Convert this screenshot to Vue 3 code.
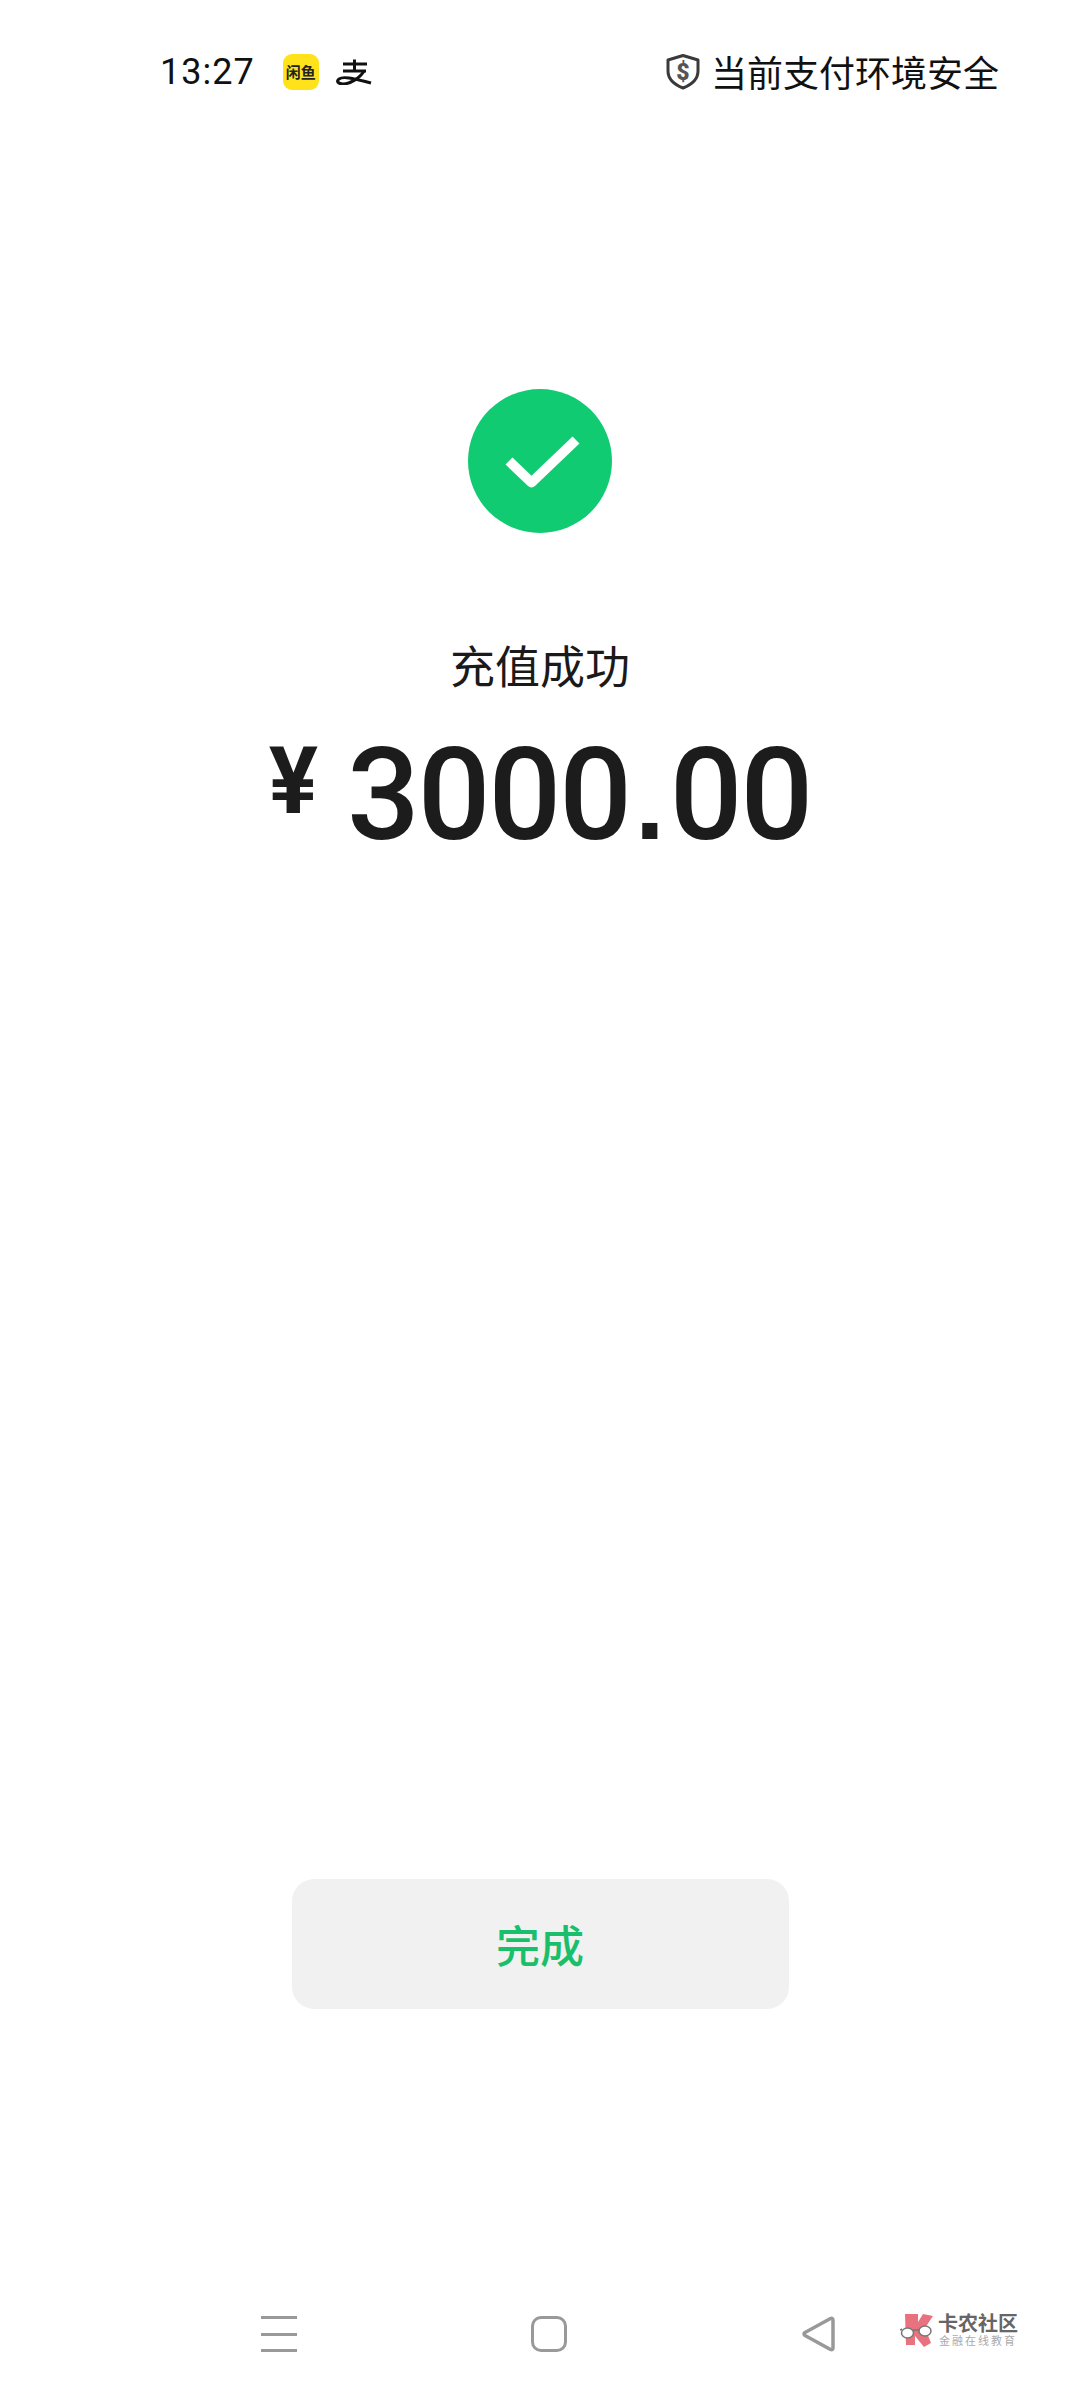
<template>
  <div class="page">
    <header class="status">
      <div class="status-left">
        <span class="time">13:27</span>
        <span class="xianyu">闲鱼</span>
        <svg class="alipay" width="36" height="26" viewBox="0 0 36 26" fill="none" stroke="#111" stroke-width="3" stroke-linecap="butt">
          <path d="M7 5h24M18.500 0.500v11.500M7 12h23" />
          <path d="M28 12C24 19 14 25 7 25 2 25 0 22 3 20 7 17 15 19 35 24" />
        </svg>
      </div>
      <div class="status-right">
        <svg class="shield" width="34" height="36" viewBox="0 0 34 36" fill="none">
          <path d="M17 1.500l15 4.500v11c0 7.500-6 13.500-15 17C8 30.500 2 24.500 2 17V6z" stroke="#3a3a3a" stroke-width="3" stroke-linejoin="round" />
          <text x="17" y="25.500" text-anchor="middle" class="dollar">$</text>
        </svg>
        <span class="safe">当前支付环境安全</span>
      </div>
    </header>

    <main class="result">
      <div class="ok-circle">
        <svg width="144" height="144" viewBox="0 0 144 144" fill="none">
          <path d="M41 72l22.500 21.500L108 51" stroke="#fff" stroke-width="10" stroke-linejoin="round" />
        </svg>
      </div>
      <h1 class="title">充值成功</h1>
      <div class="amount">
        <span class="yen">¥</span>
        <span class="value">3000<span class="dot">.</span>00</span>
      </div>
      <button class="done">完成</button>
    </main>

    <footer class="nav">
      <div class="menu"><i></i><i></i><i></i></div>
      <div class="home"></div>
      <svg class="back" width="36" height="38" viewBox="0 0 36 38" fill="none">
        <path d="M30.500 3.500Q33 2.500 33 5.500V32.500Q33 35.500 30.500 34.500L5 20.500Q3 19 5 17.500Z" stroke="#999" stroke-width="3.500" stroke-linejoin="round" />
      </svg>
      <div class="mark">
        <svg width="34" height="36" viewBox="0 0 34 36">
          <path d="M5 1H18V9L23 1 33 3 25 15 31 30 24 34 15 23V32H6Z" fill="#e8737f" />
          <path d="M0 17 2 16M13 17h6" stroke="#777" stroke-width="1.500" fill="none" />
          <ellipse cx="7.500" cy="20" rx="6" ry="5" fill="#fff" stroke="#777" stroke-width="1.500" />
          <ellipse cx="25" cy="18" rx="6" ry="5" fill="#fff" stroke="#777" stroke-width="1.500" />
        </svg>
        <div class="mark-text">
          <span class="mark-name">卡农社区</span>
          <span class="mark-sub">金融在线教育</span>
        </div>
      </div>
    </footer>
  </div>
</template>

<script setup>
</script>

<style>
html, body {
  margin: 0;
  background: #fff;
}
</style>

<style scoped>
.page {
  width: 1080px;
  height: 2400px;
  display: flex;
  flex-direction: column;
  font-family: "Noto Sans CJK SC", sans-serif;
  color: #111;
  background: #fff;
}

.status {
  height: 144px;
  flex: none;
  display: flex;
  align-items: center;
  justify-content: space-between;
  padding: 0 81px 0 160px;
  box-sizing: border-box;
}

.status-left, .status-right {
  display: flex;
  align-items: center;
}

.time {
  font-family: Roboto, sans-serif;
  font-size: 36px;
  letter-spacing: 1px;
}

.xianyu {
  width: 36px;
  height: 36px;
  margin-left: 28px;
  border-radius: 9px;
  background: #ffe21a;
  color: #222;
  font-size: 15px;
  font-weight: 700;
  line-height: 36px;
  text-align: center;
  white-space: nowrap;
}

.alipay {
  margin-left: 17px;
}

.shield {
  margin-right: 11px;
}

.dollar {
  font-family: Roboto, sans-serif;
  font-size: 23px;
  font-weight: 900;
  fill: #555;
}

.safe {
  font-size: 36px;
  line-height: 44px;
  padding-bottom: 3px;
}

.result {
  flex: 1;
  display: flex;
  flex-direction: column;
  align-items: center;
}

.ok-circle {
  width: 144px;
  height: 144px;
  margin-top: 245px;
  border-radius: 50%;
  background: #10cb72;
}

.ok-circle svg {
  display: block;
}

.title {
  margin: 102px 0 0;
  font-size: 45px;
  line-height: 60px;
  font-weight: 400;
  color: #1a1a1a;
}

.amount {
  margin-top: 36px;
  display: flex;
  align-items: flex-start;
  color: #1c1c1c;
}

.yen {
  font-family: Roboto, sans-serif;
  font-size: 92px;
  font-weight: 700;
  line-height: 92px;
  margin: 5px 29px 0 0;
}

.value {
  font-family: Roboto, sans-serif;
  font-size: 128px;
  font-weight: 500;
  line-height: 128px;
  letter-spacing: -2px;
}

.dot {
  font-family: "Liberation Sans", sans-serif;
  font-size: 107px;
  font-weight: 700;
  letter-spacing: 0;
  margin: 0 5px;
}

.done {
  width: 497px;
  height: 130px;
  margin-top: auto;
  margin-bottom: 275px;
  border: none;
  border-radius: 22px;
  background: #f1f1f1;
  color: #19bf6a;
  font-family: inherit;
  font-size: 44px;
  font-weight: 500;
}

.nav {
  height: 100px;
  flex: none;
  margin-bottom: 16px;
  display: flex;
  align-items: center;
  padding-left: 261px;
  position: relative;
}

.menu {
  width: 36px;
  display: flex;
  flex-direction: column;
  gap: 13.5px;
}

.menu i {
  display: block;
  height: 3px;
  background: #999;
}

.home {
  width: 36px;
  height: 36px;
  margin-left: 234px;
  border: 3px solid #999;
  border-radius: 10px;
  box-sizing: border-box;
}

.back {
  margin-left: 233px;
}

.mark {
  position: absolute;
  left: 900px;
  top: 29px;
  display: flex;
  gap: 4px;
}

.mark-text {
  display: flex;
  flex-direction: column;
}

.mark-name {
  font-size: 20px;
  line-height: 20px;
  font-weight: 700;
  color: #666;
}

.mark-sub {
  font-size: 11px;
  line-height: 14px;
  letter-spacing: 2px;
  margin-left: 1px;
  color: #aaa;
}
</style>
